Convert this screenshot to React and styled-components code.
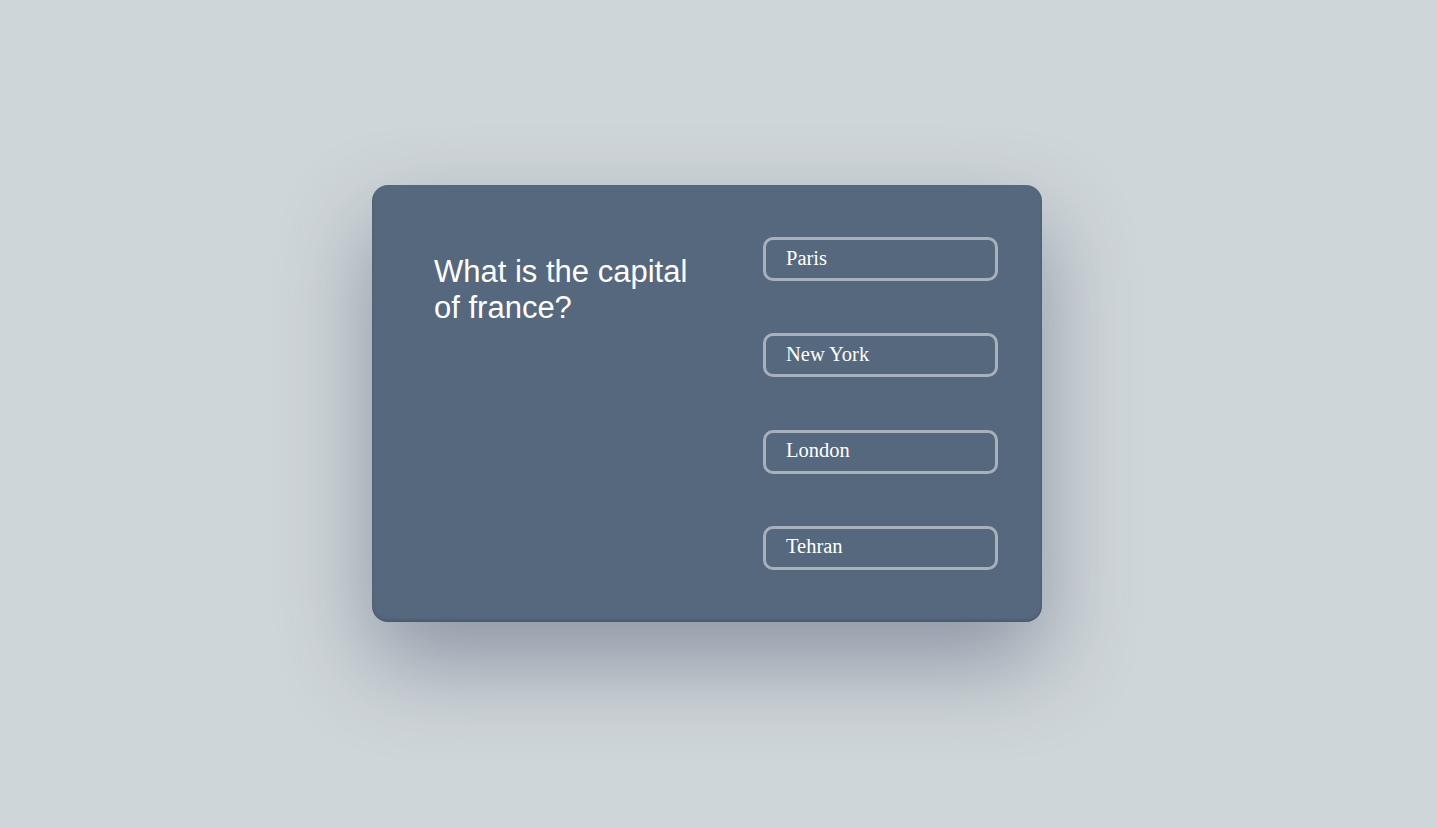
import React from 'react'
import styled, { createGlobalStyle } from 'styled-components'

const answers = ['Paris', 'New York', 'London', 'Tehran']

function App() {
  return (
    <>
      <GlobalStyle />
      <Page>
        <Card>
          <Question>What is the capital of france?</Question>
          <Answers>
            {answers.map((answer) => (
              <Answer key={answer}>{answer}</Answer>
            ))}
          </Answers>
        </Card>
      </Page>
    </>
  )
}

export default App

//styled-components
const GlobalStyle = createGlobalStyle`
  html, body {
    margin: 0;
    padding: 0;
    background: #cfd6d9;
  }
`

const Page = styled.div`
  min-height: 100vh;
  box-sizing: border-box;
  display: flex;
  align-items: center;
  justify-content: center;
  padding: 0 23px 21px 0;
`

const Card = styled.div`
  width: 670px;
  height: 437px;
  box-sizing: border-box;
  display: flex;
  justify-content: space-between;
  padding: 52px 44px 52px 62px;
  background: #56687e;
  border-radius: 16px;
  box-shadow: 0 40px 90px rgba(60, 70, 100, 0.45),
    inset 0 -2px 3px rgba(30, 45, 70, 0.25);
`

const Question = styled.h1`
  width: 270px;
  margin: 17px 0 0;
  font-family: "Liberation Sans", Arial, sans-serif;
  font-size: 31px;
  font-weight: 400;
  line-height: 1.15;
  color: #ffffff;
`

const Answers = styled.div`
  display: flex;
  flex-direction: column;
  justify-content: space-between;
  width: 235px;
`

const Answer = styled.button`
  height: 44px;
  box-sizing: border-box;
  padding: 0 20px 2px;
  text-align: left;
  background: transparent;
  border: 3px solid #a8b0bc;
  border-radius: 10px;
  font-family: "Liberation Serif", "Times New Roman", serif;
  font-size: 20.5px;
  color: #ffffff;
  cursor: pointer;
`
